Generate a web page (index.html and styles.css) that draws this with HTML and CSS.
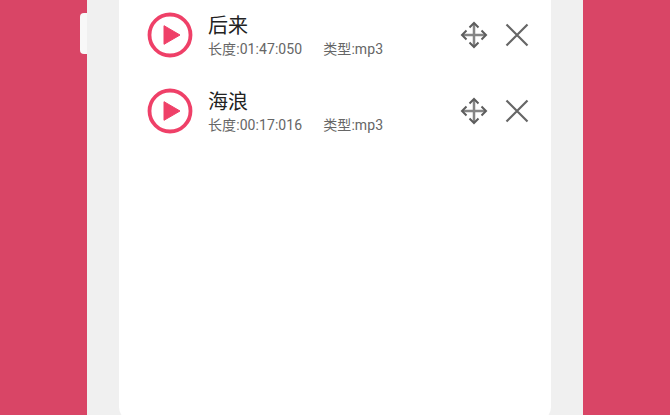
FILE: index.html
```html
<!DOCTYPE html>
<html lang="zh-CN">
<head>
  <meta charset="UTF-8">
  <meta name="viewport" content="width=device-width, initial-scale=1.0">
  <title>音频列表</title>
  <link rel="stylesheet" href="styles.css">
</head>
<body>
  <div class="panel">
    <div class="side-tab"></div>
    <div class="card">
      <div class="track">
        <svg class="play" viewBox="0 0 46 46">
          <circle cx="23" cy="23" r="20.500" fill="none" stroke="#ef4068" stroke-width="3.800"/>
          <path d="M17 13.700v18.600l16-9.300z" fill="#ef4068" stroke="#ef4068" stroke-width="1" stroke-linejoin="round"/>
        </svg>
        <div class="info">
          <div class="name">后来</div>
          <div class="meta"><span class="length">长度:01:47:050</span><span>类型:mp3</span></div>
        </div>
        <svg class="move" viewBox="0 0 28 28">
          <path d="M14 3v22M3 14h22" fill="none" stroke="#858585" stroke-width="2.500"/>
          <path d="M9.500 6.500l4.500-4.500 4.500 4.500M9.500 21.500l4.500 4.500 4.500-4.500M6.500 9.500l-4.500 4.500 4.500 4.500M21.500 9.500l4.500 4.500-4.500 4.500" fill="none" stroke="#5c5c5c" stroke-width="2"/>
        </svg>
        <svg class="close" viewBox="0 0 24 24">
          <path d="M1.500 1.500l21 21M22.500 1.500l-21 21" fill="none" stroke="#666" stroke-width="2.200"/>
        </svg>
      </div>
      <div class="track">
        <svg class="play" viewBox="0 0 46 46">
          <circle cx="23" cy="23" r="20.500" fill="none" stroke="#ef4068" stroke-width="3.800"/>
          <path d="M17 13.700v18.600l16-9.300z" fill="#ef4068" stroke="#ef4068" stroke-width="1" stroke-linejoin="round"/>
        </svg>
        <div class="info">
          <div class="name">海浪</div>
          <div class="meta"><span class="length">长度:00:17:016</span><span>类型:mp3</span></div>
        </div>
        <svg class="move" viewBox="0 0 28 28">
          <path d="M14 3v22M3 14h22" fill="none" stroke="#858585" stroke-width="2.500"/>
          <path d="M9.500 6.500l4.500-4.500 4.500 4.500M9.500 21.500l4.500 4.500 4.500-4.500M6.500 9.500l-4.500 4.500 4.500 4.500M21.500 9.500l4.500 4.500-4.500 4.500" fill="none" stroke="#5c5c5c" stroke-width="2"/>
        </svg>
        <svg class="close" viewBox="0 0 24 24">
          <path d="M1.500 1.500l21 21M22.500 1.500l-21 21" fill="none" stroke="#666" stroke-width="2.200"/>
        </svg>
      </div>
    </div>
  </div>
</body>
</html>
```

FILE: styles.css
```css
html, body {
  height: 100%;
}

body {
  margin: 0;
  background-color: #d94566;
  font-family: Roboto, "Noto Sans CJK SC", sans-serif;
  overflow: hidden;
}

.panel {
  position: relative;
  box-sizing: border-box;
  width: 496px;
  height: 421px;
  margin: 0 auto;
  padding: 0 32px;
  background-color: #f0f0f0;
}

.side-tab {
  position: absolute;
  left: -7px;
  top: 13px;
  width: 7px;
  height: 41px;
  background-color: #f8f8f8;
  border-radius: 4px 0 0 4px;
}

.card {
  height: 421px;
  background-color: #ffffff;
  border-radius: 0 0 14px 14px;
}

.track {
  display: flex;
  align-items: center;
  height: 70px;
  margin-bottom: 6px;
  padding: 0 22px 0 28px;
}

.play {
  width: 46px;
  height: 46px;
  flex-shrink: 0;
}

.info {
  flex: 1;
  margin-left: 15px;
}

.name {
  font-size: 20px;
  line-height: 26px;
  color: #222222;
}

.meta {
  margin-top: 2px;
  font-size: 14px;
  line-height: 17px;
  letter-spacing: 0.08px;
  color: #666666;
}

.length {
  margin-right: 21px;
}

.move {
  width: 28px;
  height: 28px;
}

.close {
  width: 24px;
  height: 24px;
  margin-left: 17px;
}
```
